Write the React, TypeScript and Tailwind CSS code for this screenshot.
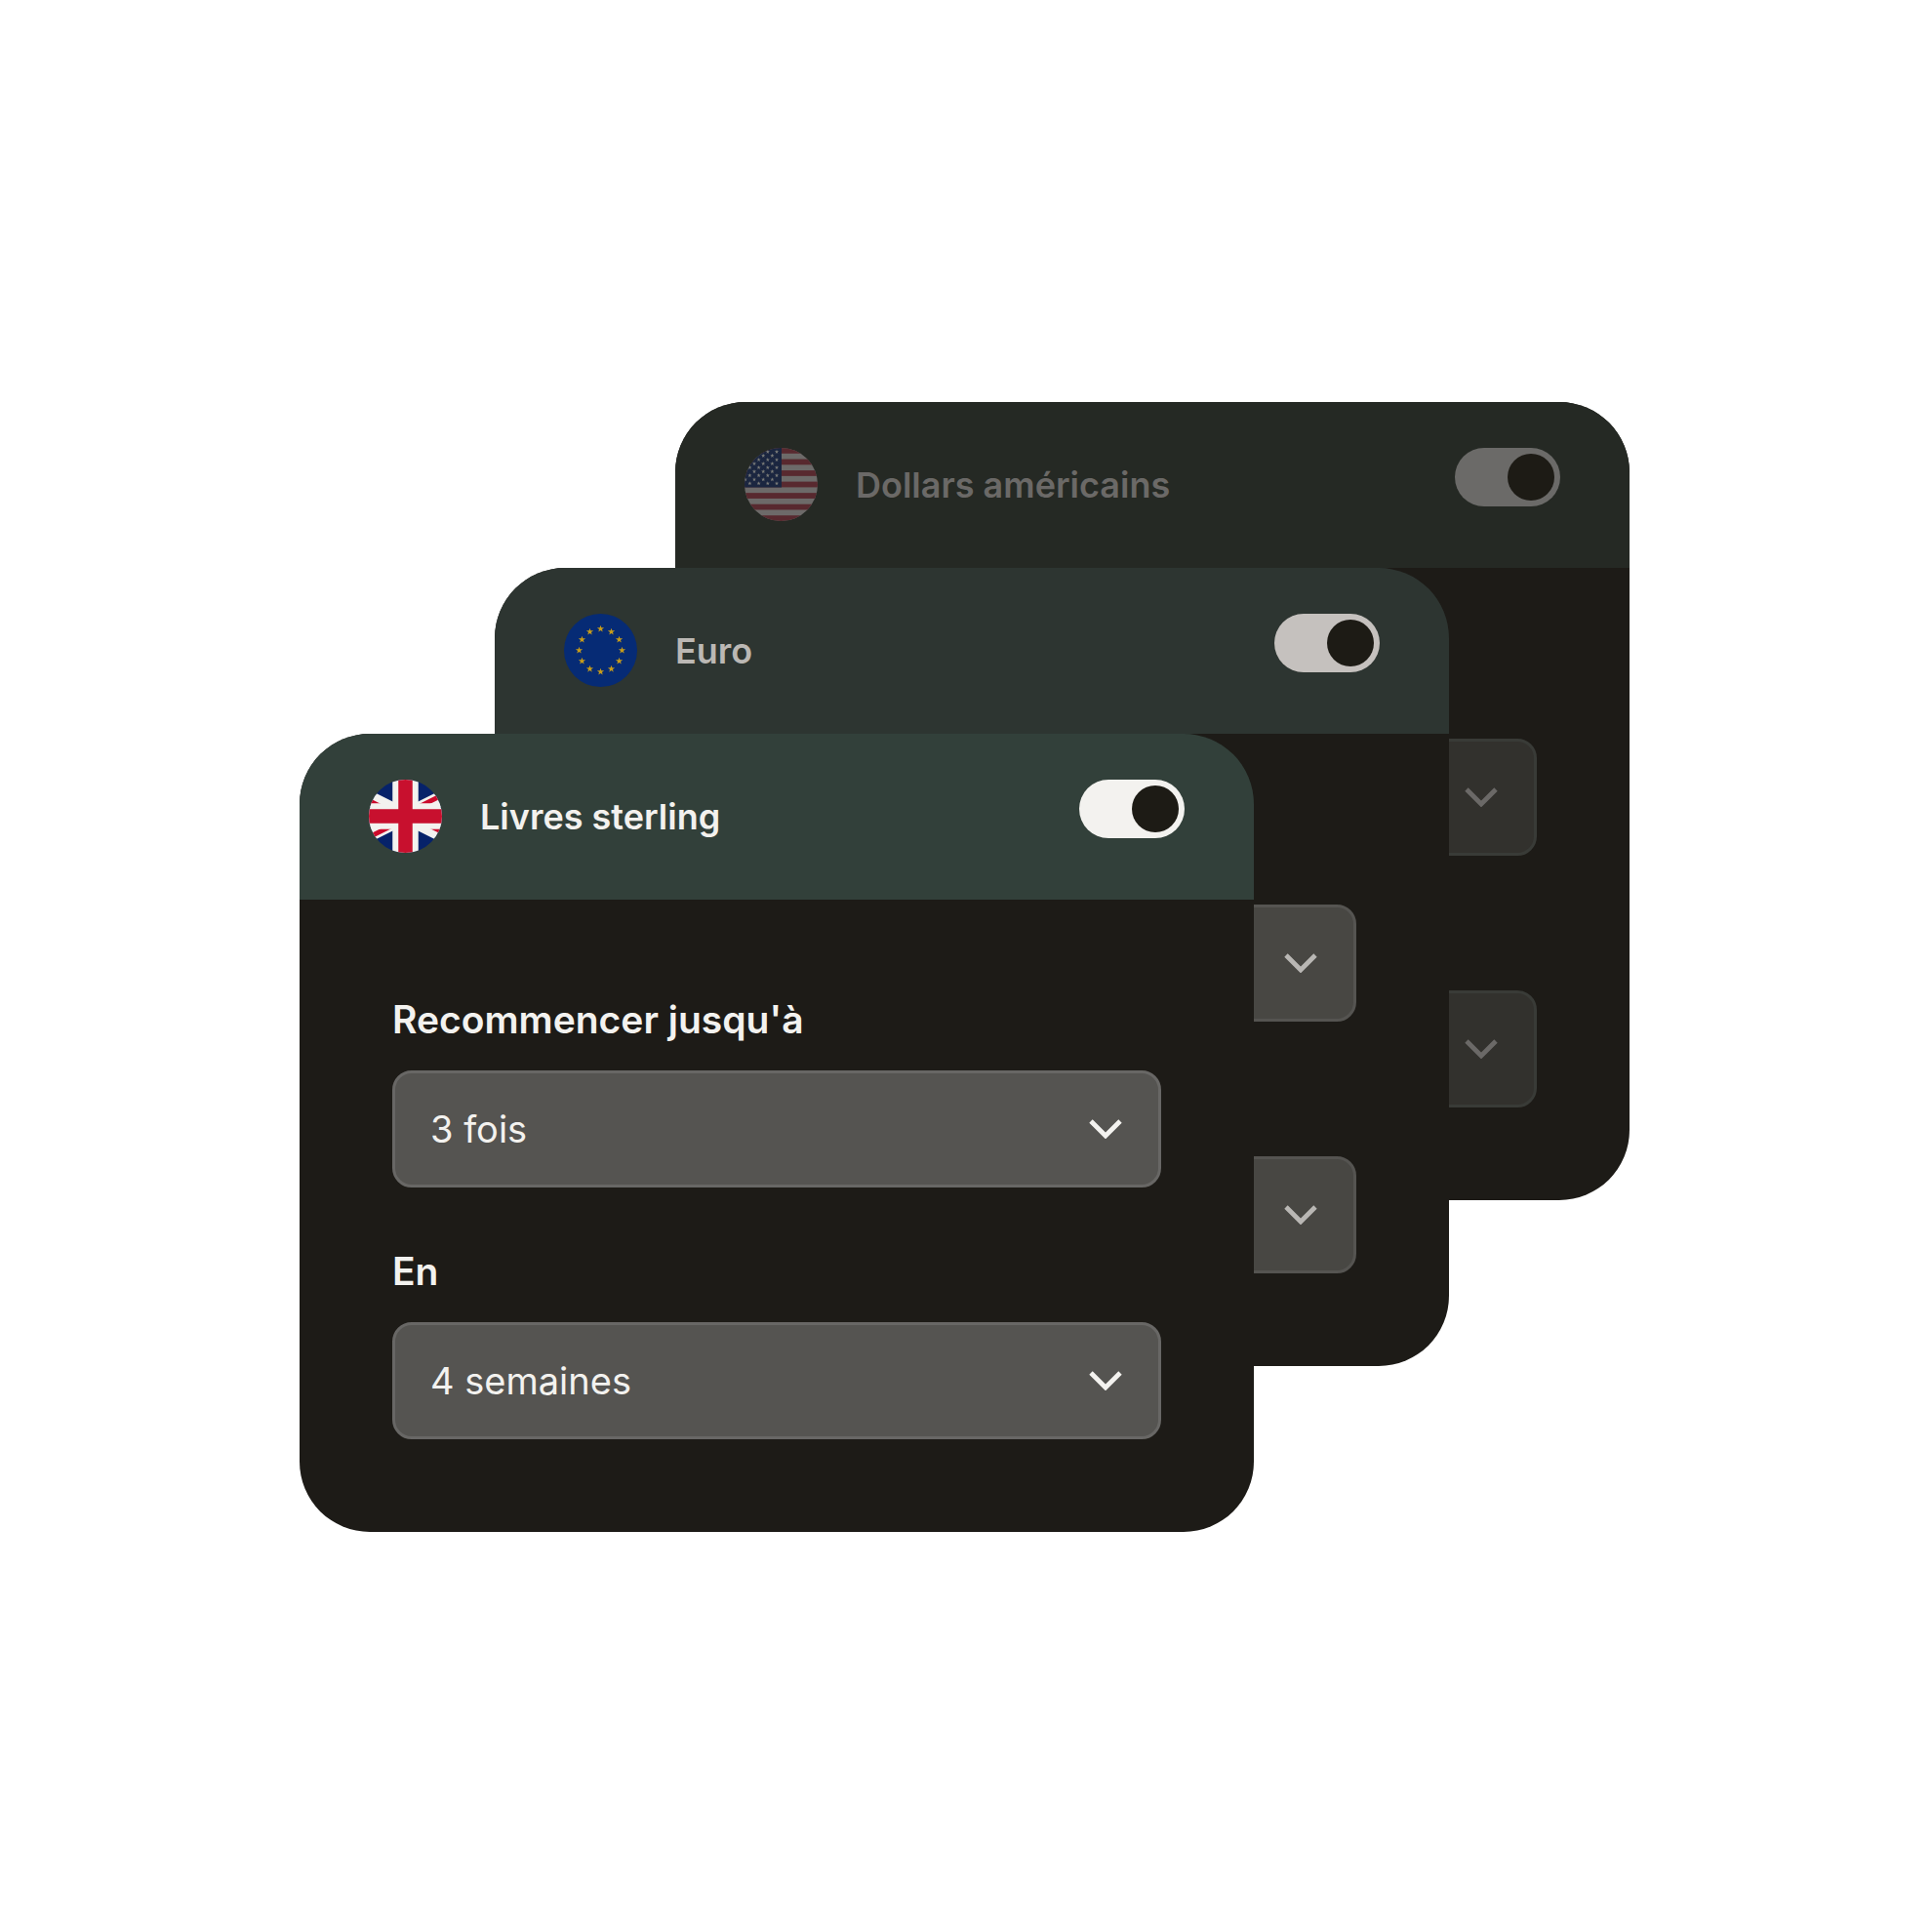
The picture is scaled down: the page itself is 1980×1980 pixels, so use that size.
import { ReactNode, useId, useState } from "react";
import clsx from "clsx";

type Tone = {
  place: string,
  header: string,
  title: string,
  toggle: string,
  label: string,
  select: string,
  chevron: string
}

const front: Tone = {
  place: "col-start-1 row-start-3",
  header: "bg-[#32403a]",
  title: "text-[#f3f1ee]",
  toggle: "bg-[#f3f2ef]",
  label: "text-[#f3f2ef]",
  select: "bg-[#555451] border-[#686765]",
  chevron: "text-[#f3f2ef]",
}

// the labels of the two cards behind are fully covered
const middle: Tone = {
  place: "col-start-2 row-start-2",
  header: "bg-[#2d3531]",
  title: "text-[#bbb8b4]",
  toggle: "bg-[#c5c1be]",
  label: "invisible",
  select: "bg-[#484743] border-[#555451]",
  chevron: "text-[#b9b7b4]",
}

const back: Tone = {
  place: "col-start-3 row-start-1",
  header: "bg-[#252924]",
  title: "text-[#6b6967]",
  toggle: "bg-[#6b6a68]",
  label: "invisible",
  select: "bg-[#32312d] border-[#393b37]",
  chevron: "text-[#6b6967]",
}

function starPoints(cx: number, cy: number, r: number) {
  return Array.from({ length: 10 }, (_, i) => {
    const radius = i % 2 ? r * 0.4 : r
    const angle = (i * Math.PI) / 5 - Math.PI / 2
    return `${(cx + radius * Math.cos(angle)).toFixed(2)},${(cy + radius * Math.sin(angle)).toFixed(2)}`
  }).join(" ")
}

function FlagUK() {
  return (
    <svg aria-hidden="true" className="size-full" viewBox="15 0 30 30">
      <clipPath id="uk-diagonals">
        <path d="M30,15 h30 v15 z v15 h-30 z h-30 v-15 z v-15 h30 z" />
      </clipPath>
      <path d="M0,0 v30 h60 v-30 z" fill="#06226a" />
      <path d="M0,0 L60,30 M60,0 L0,30" stroke="#f3f2ef" strokeWidth="6" />
      <path clipPath="url(#uk-diagonals)" d="M0,0 L60,30 M60,0 L0,30" stroke="#cb0a2b" strokeWidth="4" />
      <path d="M30,0 v30 M0,15 h60" stroke="#f3f2ef" strokeWidth="10.6" />
      <path d="M30,0 v30 M0,15 h60" stroke="#c8102e" strokeWidth="5.8" />
    </svg>
  )
}

function FlagEU() {
  return (
    <svg aria-hidden="true" className="size-full" viewBox="0 0 75 75">
      <path d="M0,0 h75 v75 h-75 z" fill="#062b75" />
      {Array.from({ length: 12 }, (_, i) => {
        const angle = (i * Math.PI) / 6
        return (
          <polygon
            fill="#c59b1b"
            key={i}
            points={starPoints(37.5 + 22 * Math.sin(angle), 37.5 - 22 * Math.cos(angle), 3.8)}
          />
        )
      })}
    </svg>
  )
}

function FlagUS() {
  const stars = []
  for (let row = 0; row < 9; row++) {
    for (let col = 0; col < 4; col++) {
      stars.push([33 - (row % 2) * 4.6 - col * 9.2, 4 + row * 4.05])
    }
  }

  return (
    <svg aria-hidden="true" className="size-full" viewBox="0 0 75 75">
      <path d="M0,0 h75 v75 h-75 z" fill="#6d6a69" />
      {[0, 1, 2, 3, 4, 5, 6].map((i) => (
        <rect fill="#58292f" height="5.77" key={i} width="75" x="0" y={i * 11.54} />
      ))}
      <path d="M0,0 h38 v40.4 h-38 z" fill="#1b2640" />
      {stars.map(([x, y]) => (
        <polygon fill="#7b7c79" key={`${x}-${y}`} points={starPoints(x, y, 2.2)} />
      ))}
    </svg>
  )
}

function Toggle({ label, tone }: { label: string, tone: Tone }) {
  const [on, setOn] = useState(true)

  return (
    <input
      aria-label={label}
      checked={on}
      className={clsx(
        "flex h-15 w-27 shrink-0 cursor-pointer appearance-none rounded-full p-1.5 checked:justify-end",
        "before:size-12 before:rounded-full before:bg-[#1d1b15]",
        tone.toggle
      )}
      onChange={() => setOn(!on)}
      role="switch"
      type="checkbox"
    />
  )
}

function Field({ label, options, tone }: { label: string, options: string[], tone: Tone }) {
  const id = useId()

  return (
    <div>
      <label className={clsx("mb-[25px] block text-[39px] leading-[54px] font-semibold", tone.label)} htmlFor={id}>
        {label}
      </label>
      <div className="grid items-center">
        <select
          className={clsx(
            "col-start-1 row-start-1 h-30 w-full appearance-none rounded-[20px] border-3 px-9 text-[38px] text-[#f3f2ef]",
            tone.select
          )}
          id={id}
        >
          {options.map((option) => <option key={option}>{option}</option>)}
        </select>
        <svg
          aria-hidden="true"
          className={clsx("pointer-events-none col-start-1 row-start-1 mr-10 h-5 w-[34px] justify-self-end", tone.chevron)}
          fill="none"
          viewBox="0 0 34 20"
        >
          <path d="M2 2 L17 17 L32 2" stroke="currentColor" strokeWidth="4.8" />
        </svg>
      </div>
    </div>
  )
}

function CurrencyCard({ name, flag, tone }: { name: string, flag: ReactNode, tone: Tone }) {
  return (
    <section className={clsx("col-span-3 row-span-3 overflow-hidden rounded-[72px] bg-[#1d1b17]", tone.place)}>
      <header className={clsx("flex h-[170px] items-start px-[71px] pt-[47px]", tone.header)}>
        <div className="size-[75px] shrink-0 overflow-hidden rounded-full">{flag}</div>
        <h2 className={clsx("ml-[39px] flex-1 text-[36px] leading-[76px] font-semibold", tone.title)}>{name}</h2>
        <Toggle label={name} tone={tone} />
      </header>
      <div className="flex flex-col gap-[59px] p-[95px] pt-24">
        <Field label="Recommencer jusqu'à" options={["3 fois"]} tone={tone} />
        <Field label="En" options={["4 semaines"]} tone={tone} />
      </div>
    </section>
  )
}

export default function App() {
  return (
    <main className="flex min-h-screen items-center justify-center bg-white pt-0.5 pr-[27px] pl-6 font-['Inter','Liberation_Sans',sans-serif]">
      {/* each card starts one row lower and one column further left than the one behind it */}
      <div className="grid w-full max-w-[1363px] grid-cols-[200fr_185fr_593fr_200fr_185fr] grid-rows-[170px_170px_auto_170px_170px]">
        <CurrencyCard flag={<FlagUS />} name="Dollars américains" tone={back} />
        <CurrencyCard flag={<FlagEU />} name="Euro" tone={middle} />
        <CurrencyCard flag={<FlagUK />} name="Livres sterling" tone={front} />
      </div>
    </main>
  )
}
